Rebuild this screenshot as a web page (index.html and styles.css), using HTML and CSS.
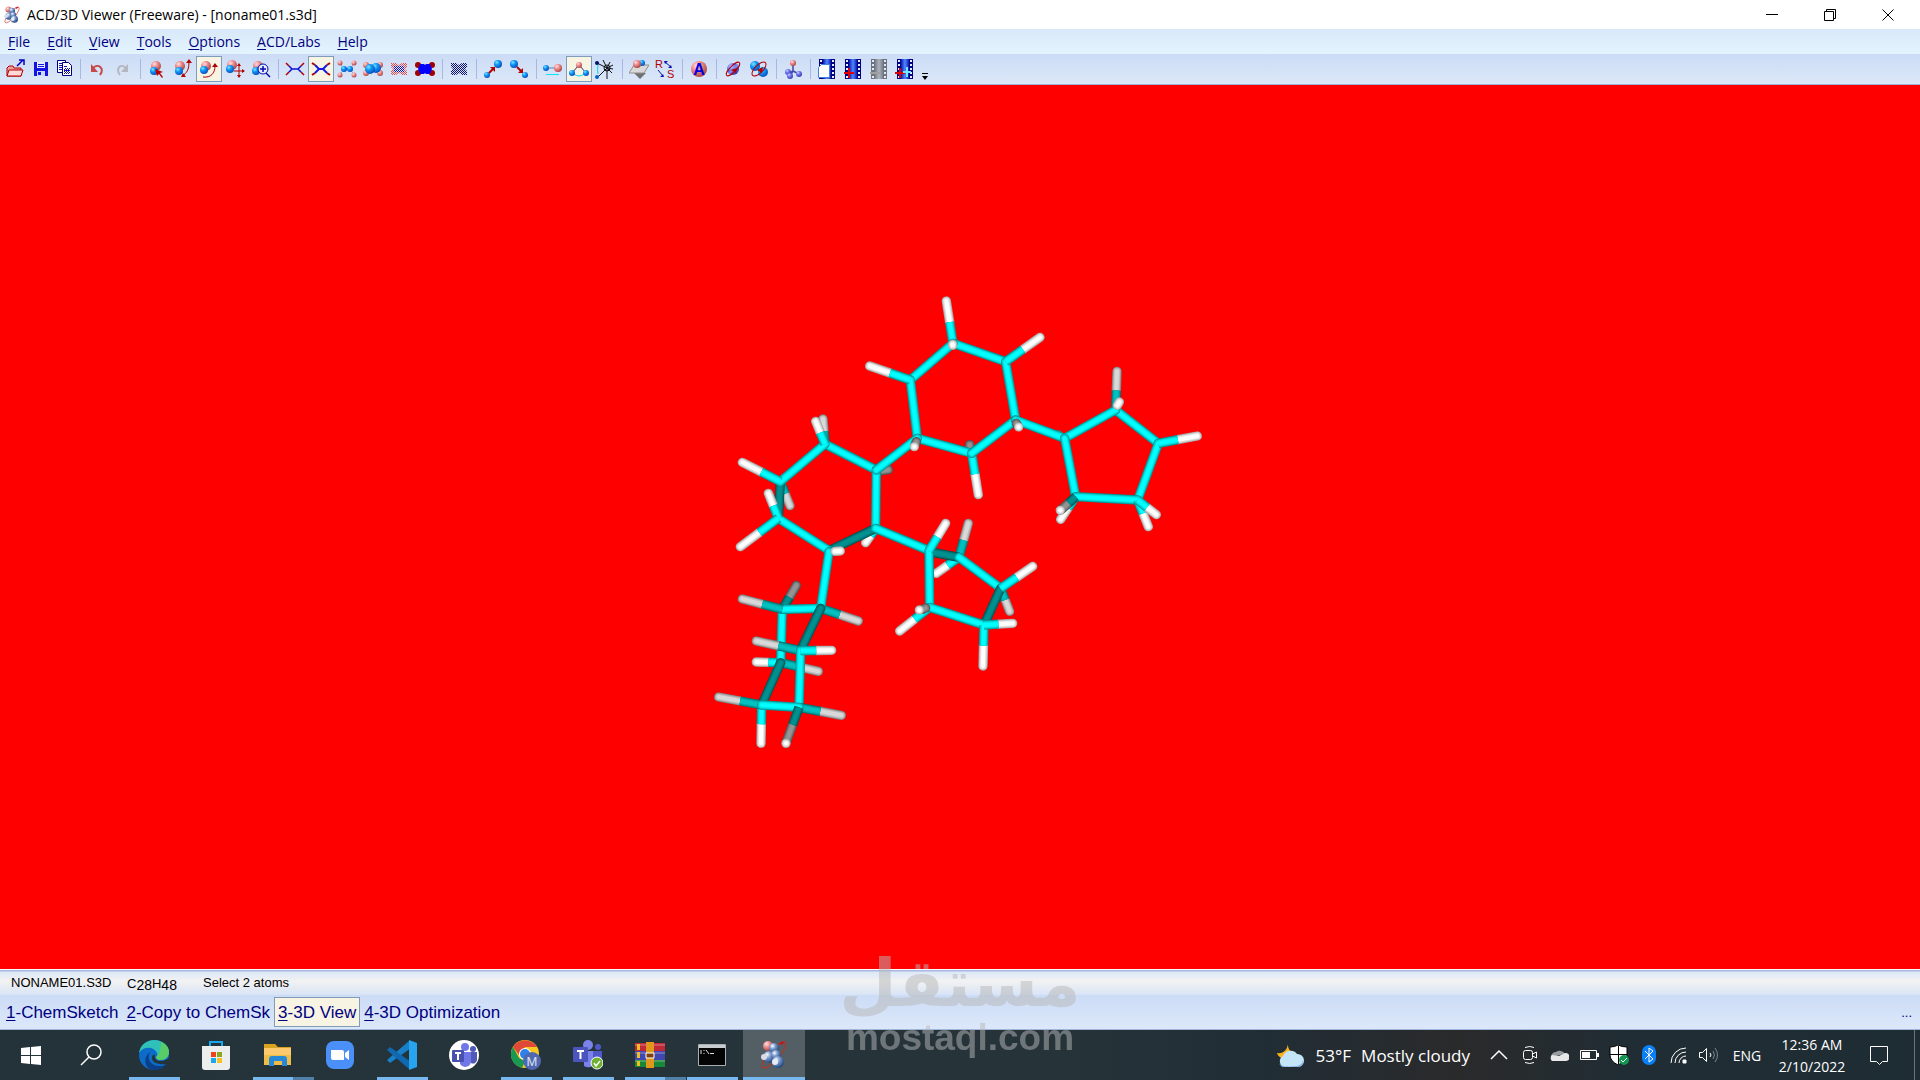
FILE: index.html
```html
<!DOCTYPE html>

<html lang="en">
<head>
    <meta charset="utf-8">
    <title>ACD/3D Viewer (Freeware) - [noname01.s3d]</title>
    <link rel="stylesheet" href="styles.css">
</head>

<body>

<!-- gradients and shapes shared by the icons -->
<svg class="defs" aria-hidden="true">
    <defs>
        <radialGradient id="red" cx="35%" cy="30%" r="75%">
            <stop offset="0" stop-color="#ffe4e4"/><stop offset=".4" stop-color="#ef9090"/><stop offset="1" stop-color="#a84040"/>
        </radialGradient>
        <radialGradient id="blue" cx="35%" cy="30%" r="75%">
            <stop offset="0" stop-color="#7fe8ff"/><stop offset=".4" stop-color="#1098f8"/><stop offset="1" stop-color="#0848b8"/>
        </radialGradient>
        <radialGradient id="violet" cx="35%" cy="30%" r="75%">
            <stop offset="0" stop-color="#d0d0ff"/><stop offset=".4" stop-color="#7078f0"/><stop offset="1" stop-color="#3838b0"/>
        </radialGradient>
        <radialGradient id="steel" cx="35%" cy="30%" r="75%">
            <stop offset="0" stop-color="#ffffff"/><stop offset=".4" stop-color="#7898cc"/><stop offset="1" stop-color="#1c4074"/>
        </radialGradient>
        <linearGradient id="film" x1="0" x2="1">
            <stop offset="0" stop-color="#0818b0"/><stop offset=".5" stop-color="#5088ff"/><stop offset="1" stop-color="#0818b0"/>
        </linearGradient>
        <pattern id="reddots" width="2" height="2" patternUnits="userSpaceOnUse"><path d="M0 0h1v1H0zM1 1h1v1H1z" fill="#e84848"/></pattern>
        <pattern id="bluedots" width="2" height="2" patternUnits="userSpaceOnUse"><path d="M0 0h2v2H0z" fill="#e8f0ff"/><path d="M0 0h1v1H0zM1 1h1v1H1z" fill="#1010c8"/></pattern>
        <pattern id="navydots" width="2" height="2" patternUnits="userSpaceOnUse"><path d="M0 0h1v1H0zM1 1h1v1H1z" fill="#101078"/></pattern>
        <symbol id="logo" viewBox="0 0 30 30">
            <ellipse cx="15" cy="15" rx="5" ry="17" fill="none" stroke="#c03020" stroke-width="1" transform="rotate(42 15 15)"/>
            <circle cx="9" cy="6" r="5" fill="url(#red)"/>
            <circle cx="15" cy="8" r="5" fill="url(#steel)"/>
            <circle cx="10" cy="17" r="6" fill="url(#steel)"/>
            <circle cx="17" cy="15" r="5" fill="url(#steel)"/>
            <circle cx="19" cy="22" r="6" fill="url(#steel)"/>
            <circle cx="5" cy="17" r="3" fill="#d8dce4"/>
            <circle cx="16" cy="22" r="3" fill="#e8ecf4"/>
            <path d="M20 3l6-2-3 4z" fill="#d01010"/>
        </symbol>
        <symbol id="filmstrip" viewBox="0 0 20 20">
            <path d="M2 0h16v20H2z" fill="#000080"/>
            <path d="M6 0h8v20H6z" fill="url(#film)"/>
            <path d="M3 1h2v2H3zm0 4h2v2H3zm0 4h2v2H3zm0 4h2v2H3zm0 4h2v2H3zM15 1h2v2h-2zm0 4h2v2h-2zm0 4h2v2h-2zm0 4h2v2h-2zm0 4h2v2h-2z" fill="#e8f0ff"/>
        </symbol>
    </defs>
</svg>

<header class="titlebar">
    <svg class="appicon" viewBox="0 0 30 30"><use href="#logo"/></svg>
    <h1>ACD/3D Viewer (Freeware) - [noname01.s3d]</h1>
    <div class="winbuttons">
        <button aria-label="Minimize"><svg viewBox="0 0 12 12"><path d="M0 5.5h12"/></svg></button>
        <button aria-label="Restore"><svg viewBox="0 0 12 12"><path d="M.5 2.5h9v9h-9zM2.5 2.5v-2h9v9h-2"/></svg></button>
        <button aria-label="Close"><svg viewBox="0 0 12 12"><path d="M.5.5l11 11M11.5.5l-11 11"/></svg></button>
    </div>
</header>

<nav class="menu">
    <button><u>F</u>ile</button>
    <button><u>E</u>dit</button>
    <button><u>V</u>iew</button>
    <button><u>T</u>ools</button>
    <button><u>O</u>ptions</button>
    <button><u>A</u>CD/Labs</button>
    <button><u>H</u>elp</button>
</nav>

<div class="toolbar">
    <div class="group files">
        <button aria-label="Open"><svg viewBox="0 0 20 20"><path d="M1 17V9l2-2h4l1 2h7v8z" fill="#f0a0a0" stroke="#b00000"/><path d="M1 17l2-6h14l-2 6z" fill="#ffd8d8" stroke="#b00000"/><path d="M11 7l6-6M13 1h5v5" fill="none" stroke="#0000c0" stroke-width="1.5"/></svg></button>
        <button aria-label="Save"><svg viewBox="0 0 20 20"><path d="M4 3h14v14H4z" fill="#1414e0"/><path d="M7 3h8v6H7z" fill="#e8f0ff"/><path d="M8 5.5h6M8 7.5h6" stroke="#1414e0"/><path d="M7 12h8v5H7z" fill="#c8d8f8"/><path d="M8 13h3v3H8z" fill="#1414e0"/></svg></button>
        <button aria-label="Copy"><svg viewBox="0 0 20 20"><path d="M3.5 1.5h8v12h-8z" fill="#fff" stroke="#000080"/><path d="M5 4.5h4M5 6.500h4M5 8.500h4M5 10.5h4" stroke="#1010c0"/><path d="M8.500 3.500h6l3 3v10h-9z" fill="#fff" stroke="#000080"/><path d="M10 9h6v6h-6z" fill="url(#navydots)"/><path d="M10 7.500h3M10 11.500h6" stroke="#1010c0"/></svg></button>
    </div>
    <i class="sep"></i>
    <div class="group">
        <button aria-label="Undo"><svg viewBox="0 0 20 20"><path d="M6 9c5-5 12 0 7 7" fill="none" stroke="#c84848" stroke-width="2"/><path d="M4 5v8h7z" fill="#c84848"/></svg></button>
        <button aria-label="Redo" disabled><svg viewBox="0 0 20 20"><path d="M13 9c-5-5-11 0-6 7" fill="none" stroke="#b4b8be" stroke-width="2"/><path d="M15 5v8H8z" fill="#b4b8be"/></svg></button>
    </div>
    <i class="sep"></i>
    <div class="group">
        <button aria-label="Select"><svg viewBox="0 0 20 20"><circle cx="9" cy="7" r="5" fill="url(#red)"/><circle cx="7" cy="12" r="4" fill="url(#blue)"/><path d="M8 10l8 3-3 1 3 4-1 1-3-4-2 2z" fill="#b80000"/></svg></button>
        <button aria-label="Select and rotate"><svg viewBox="0 0 20 20"><circle cx="7" cy="7" r="5" fill="url(#red)"/><circle cx="6" cy="12" r="4" fill="url(#blue)"/><path d="M16 2c0 9-2 12-7 15" fill="none" stroke="#b00000"/><path d="M16 0l-3 4h6zM8 18l5 0-3-4z" fill="#b00000"/></svg></button>
        <button class="on" aria-label="Rotate 3D" aria-pressed="true"><svg viewBox="0 0 20 20"><circle cx="7" cy="7" r="5" fill="url(#red)"/><circle cx="5" cy="11" r="4" fill="url(#blue)"/><path d="M4 18c8 1 12-4 12-11" fill="none" stroke="#b00000"/><path d="M16 4l-3 4h6z" fill="#b00000"/></svg></button>
        <button aria-label="Move"><svg viewBox="0 0 20 20"><circle cx="7" cy="6" r="5" fill="url(#red)"/><circle cx="5" cy="10" r="4" fill="url(#blue)"/><path d="M14 6v12M9 12h10" stroke="#b00000"/><path d="M14 4l-2 3h4zm0 15l-2-3h4zM20 12l-3-2v4z" fill="#b00000"/></svg></button>
        <button aria-label="Zoom"><svg viewBox="0 0 20 20"><circle cx="7" cy="7" r="5" fill="url(#red)"/><circle cx="5" cy="12" r="4" fill="url(#blue)"/><circle cx="12" cy="10" r="5" fill="#e4f0ff" stroke="#0808b0"/><path d="M12 7v6M9 10h6M15 14l4 4" stroke="#0808b0" stroke-width="1.5"/></svg></button>
    </div>
    <i class="sep"></i>
    <div class="group">
        <button aria-label="Wireframe"><svg viewBox="0 0 20 20"><path d="M1 4l3 3M1 16l3-3M19 4l-3 3M19 16l-3-3" stroke="#b00000" stroke-width="1.5"/><path d="M4 7l3 3-3 3M7 10h6M16 7l-3 3 3 3" fill="none" stroke="#1010d0" stroke-width="1.5"/></svg></button>
        <button class="on" aria-label="Sticks" aria-pressed="true"><svg viewBox="0 0 20 20"><path d="M1 4l3 2M1 16l3-2M19 4l-3 2M19 16l-3-2" stroke="#b00000" stroke-width="2"/><path d="M4 6l4 4-4 4M7 10h6M16 6l-4 4 4 4" fill="none" stroke="#1818e0" stroke-width="2"/></svg></button>
        <button aria-label="Balls and Sticks"><svg viewBox="0 0 20 20"><path d="M2 3l5 7-5 7M18 3l-5 7 5 7M7 10h6" fill="none" stroke="#a0a8d0"/><circle cx="3" cy="4" r="2.500" fill="url(#red)"/><circle cx="3" cy="16" r="2.500" fill="url(#red)"/><circle cx="17" cy="4" r="2.500" fill="url(#red)"/><circle cx="17" cy="16" r="2.500" fill="url(#red)"/><path d="M7 10h6" stroke="#0848b8" stroke-width="2"/><circle cx="7" cy="10" r="3" fill="url(#blue)"/><circle cx="13" cy="10" r="3" fill="url(#blue)"/></svg></button>
        <button aria-label="Spacefill"><svg viewBox="0 0 20 20"><circle cx="3" cy="6" r="3" fill="url(#red)"/><circle cx="3" cy="14" r="3" fill="url(#red)"/><circle cx="17" cy="6" r="3" fill="url(#red)"/><circle cx="17" cy="14" r="3" fill="url(#red)"/><circle cx="13" cy="9" r="5" fill="url(#blue)"/><circle cx="7" cy="10" r="5" fill="url(#blue)"/></svg></button>
        <button aria-label="Dots Only"><svg viewBox="0 0 20 20"><path d="M2 4h5l3 2 3-2h5v4l-2 2 2 2v4h-5l-3-2-3 2H2v-4l2-2-2-2z" fill="url(#reddots)"/><path d="M5 7h10v6H5z" fill="url(#bluedots)"/></svg></button>
        <button aria-label="Disks"><svg viewBox="0 0 20 20"><circle cx="3" cy="6" r="3" fill="#a00000"/><circle cx="3" cy="14" r="3" fill="#a00000"/><circle cx="17" cy="6" r="3" fill="#a00000"/><circle cx="17" cy="14" r="3" fill="#a00000"/><path d="M5 5h4l1 1 1-1h4l2 5-2 5h-4l-1-1-1 1H5l-2-5z" fill="#0000ff"/></svg></button>
    </div>
    <i class="sep"></i>
    <div class="group">
        <button aria-label="With Dots"><svg viewBox="0 0 20 20"><path d="M2 4h5l3 2 3-2h5v4l-2 2 2 2v4h-5l-3-2-3 2H2v-4l2-2-2-2z" fill="url(#navydots)"/></svg></button>
    </div>
    <i class="sep"></i>
    <div class="group">
        <button aria-label="Add atom"><svg viewBox="0 0 20 20"><circle cx="15" cy="5" r="4" fill="url(#blue)"/><circle cx="4" cy="16" r="3" fill="url(#blue)"/><path d="M6 14l4-4" stroke="#b00000" stroke-width="2"/><path d="M12 8v5l-5-5z" fill="#b00000"/></svg></button>
        <button aria-label="Remove atom"><svg viewBox="0 0 20 20"><circle cx="5" cy="5" r="4" fill="url(#blue)"/><circle cx="16" cy="16" r="3" fill="url(#blue)"/><path d="M8 8l4 4" stroke="#b00000" stroke-width="2"/><path d="M14 9v5H9z" fill="#b00000"/></svg></button>
    </div>
    <i class="sep"></i>
    <div class="group">
        <button aria-label="Bond length"><svg viewBox="0 0 20 20"><path d="M4 9h10" stroke="#6080a0"/><circle cx="3" cy="9" r="3" fill="url(#blue)"/><circle cx="15" cy="9" r="4" fill="url(#red)"/><path d="M3 15.5h13" stroke="#00e8f8"/></svg></button>
        <button class="on" aria-label="Bond angle" aria-pressed="true"><svg viewBox="0 0 20 20"><path d="M2 15l8-9 8 9" fill="none" stroke="#303060"/><circle cx="10" cy="6" r="3" fill="url(#red)"/><path d="M5 15q5 4 10 0" fill="none" stroke="#00d8f0"/><circle cx="3" cy="14" r="3" fill="url(#blue)"/><circle cx="17" cy="14" r="3" fill="url(#blue)"/></svg></button>
        <button aria-label="Torsion angle"><svg viewBox="0 0 20 20"><path d="M2 4l10 5-9 9M12 9l-4-8M12 9l3-6M12 9l6-3M12 9l6 1M12 9l5 5M12 9v11" fill="none" stroke="#101018"/><circle cx="12" cy="9" r="3" fill="none" stroke="#101018"/><path d="M3 6q-1 5 0 9" fill="none" stroke="#00d8f0"/><circle cx="2" cy="4" r="2" fill="#001068"/><circle cx="2" cy="18" r="2" fill="#0068c0"/></svg></button>
    </div>
    <i class="sep"></i>
    <div class="group">
        <button aria-label="Center"><svg viewBox="0 0 20 20"><path d="M5 14h12l-6 6z" fill="#707070"/><path d="M0 14l5-8h15l-5 8z" fill="#d8d8d8" stroke="#909090"/><circle cx="13" cy="4" r="3" fill="url(#blue)"/><circle cx="8" cy="5" r="4" fill="url(#red)"/></svg></button>
        <button aria-label="Invert R/S"><svg viewBox="0 0 20 20"><text class="glyph-rs" x="0" y="9">R</text><text class="glyph-rs" x="12" y="19">S</text><path d="M10 3l6 5M3 11l5 6" stroke="#1010b0"/><path d="M9 2h4l-3 3zM17 9h-4l3-3zM9 18H5l3-3z" fill="#1010b0"/></svg></button>
    </div>
    <i class="sep"></i>
    <div class="group">
        <button aria-label="Label atoms"><svg viewBox="0 0 20 20"><circle cx="10" cy="10" r="8" fill="url(#red)"/><text class="glyph-a" x="10" y="16">A</text></svg></button>
    </div>
    <i class="sep"></i>
    <div class="group">
        <button aria-label="Auto rotate"><svg viewBox="0 0 20 20"><circle cx="10" cy="10" r="6" fill="url(#violet)"/><ellipse cx="10" cy="10" rx="9" ry="3" fill="none" stroke="#b00000" transform="rotate(-45 10 10)"/><path d="M5 14L14 5l2 1-9 9z" fill="#8088f0"/><path d="M14 9l-6 2 5 3z" fill="#b00000"/></svg></button>
        <button aria-label="Auto rotate and change style"><svg viewBox="0 0 20 20"><circle cx="6" cy="7" r="5" fill="url(#blue)"/><circle cx="14" cy="13" r="5" fill="url(#blue)"/><ellipse cx="10" cy="10" rx="9" ry="4" fill="none" stroke="#b00000" transform="rotate(-45 10 10)"/><path d="M14 8l-6 3 5 3z" fill="#b00000"/></svg></button>
    </div>
    <i class="sep"></i>
    <div class="group">
        <button aria-label="3D Optimization"><svg viewBox="0 0 20 20"><path d="M10 4v8l-5 3M10 12l6 3M10 12l-3 5" fill="none" stroke="#4048a0" stroke-width="1.5"/><circle cx="10" cy="4" r="3" fill="url(#red)"/><circle cx="5" cy="13" r="3" fill="url(#violet)"/><circle cx="7" cy="17" r="3" fill="url(#violet)"/><circle cx="16" cy="15" r="3" fill="url(#violet)"/></svg></button>
    </div>
    <i class="sep"></i>
    <div class="group">
        <button aria-label="New movie"><svg viewBox="0 0 20 20"><use href="#filmstrip"/><path d="M1.500 8.500l3-3h8v13h-11z" fill="#fff" stroke="#4080e0"/></svg></button>
        <button aria-label="Add frame"><svg viewBox="0 0 20 20"><use href="#filmstrip"/><path d="M6 9v10M1 14h10" stroke="#e00000" stroke-width="2"/></svg></button>
        <button aria-label="Remove frame" disabled><svg viewBox="0 0 20 20"><use href="#filmstrip" class="gray"/><path d="M1 14h10" stroke="#a0a0a0" stroke-width="2"/></svg></button>
        <button aria-label="Record"><svg viewBox="0 0 20 20"><use href="#filmstrip"/><path d="M5 9v10M0 14h10" stroke="#e00000" stroke-width="2"/><path d="M12 8v10M8 13h8" stroke="#70e8ff" stroke-width="2"/></svg></button>
    </div>
    <button class="more" aria-label="More buttons"><svg viewBox="0 0 6 8"><path d="M0 1h6v1H0zM0 4h6L3 8z"/></svg></button>
</div>

<main class="scene">
    <svg id="molecule" viewBox="-2097 -585 5760 2652" role="img" aria-label="C28H48"></svg>
</main>

<footer class="status">
    <span class="filename">NONAME01.S3D</span>
    <span class="formula">C<sub>28</sub>H<sub>48</sub></span>
    <span>Select 2 atoms</span>
</footer>

<nav class="tabs">
    <button><u>1</u>-ChemSketch</button>
    <button><u>2</u>-Copy to ChemSk</button>
    <button class="on"><u>3</u>-3D View</button>
    <button><u>4</u>-3D Optimization</button>
    <span class="dots">...</span>
</nav>

<div class="taskbar">
    <button class="start" aria-label="Start"><svg viewBox="0 0 30 30"><path d="M5 8l9-1v8H5zM15 7l10-1v9H15zM5 16h9v8l-9-1zM15 16h10v9l-10-1z" fill="#fff"/></svg></button>
    <button aria-label="Search"><svg viewBox="0 0 30 30"><circle cx="17" cy="12" r="7" fill="none" stroke="#fff" stroke-width="1.5"/><path d="M12 17l-8 8" stroke="#fff" stroke-width="1.5"/></svg></button>
    <button class="open" aria-label="Edge"><svg viewBox="0 0 30 30"><circle cx="15" cy="15" r="15" fill="#0c6cc8"/><path d="M0 13C1 5 8 0 15 0c9 0 15 6 15 12 0 5-4 8-8 8-3 0-5-1-5-3 1-1 2-2 1-4C15 6 4 6 0 13z" fill="#30c0b8"/><path d="M22 2c5 2 8 6 8 10 0 5-4 8-8 8-3 0-5-1-5-3 4-3 5-9 5-15z" fill="#58cc68"/><path d="M11 12c-4 7 1 15 11 14 3 0 5-2 6-3-3 5-8 7-13 7-9 0-12-12-4-18z" fill="#0c3f88"/><path d="M16 15c-1 4 2 6 6 6 3 0 5-1 8-3v5l-3 1c-7 1-14-1-14-6 0-2 1-4 3-3z" fill="#24333a"/></svg></button>
    <button aria-label="Store"><svg viewBox="0 0 30 30"><path d="M9 7V2h12v5" fill="none" stroke="#18a8f0" stroke-width="2"/><path d="M1 6h28v21a3 3 0 0 1-3 3H4a3 3 0 0 1-3-3z" fill="#eceeee"/><path d="M10 12h5v5h-5z" fill="#f04020"/><path d="M16 12h5v5h-5z" fill="#88a820"/><path d="M10 18h5v5h-5z" fill="#18a8f0"/><path d="M16 18h5v5h-5z" fill="#f8c020"/></svg></button>
    <button class="open many" aria-label="File Explorer"><svg viewBox="0 0 30 30"><path d="M1 4h11l3 3h13v18H1z" fill="#d8a420"/><path d="M1 8h27v17H1z" fill="#fcca6c"/><path d="M1 15h27v10H1z" fill="#f0bc48"/><path d="M6 26v-7a3 3 0 0 1 3-3h12a3 3 0 0 1 3 3v7h-5v-5h-8v5z" fill="#2888d8"/></svg></button>
    <button aria-label="Zoom"><svg viewBox="0 0 30 30"><rect x="1" y="1" width="28" height="28" rx="8" fill="#4a90f8"/><path d="M6 10h11a2 2 0 0 1 2 2v8H8a2 2 0 0 1-2-2zM20 13l4-3v10l-4-3z" fill="#fff"/></svg></button>
    <button class="open" aria-label="Visual Studio Code"><svg viewBox="0 0 30 30"><path d="M22 1L0 20l3 3L24 8z" fill="#1880c8"/><path d="M22 29L0 10l3-3 21 15z" fill="#1068b0"/><path d="M22 0l8 3v24l-8 3z" fill="#28a4ee"/></svg></button>
    <button aria-label="Teams"><svg viewBox="0 0 30 30"><circle cx="15" cy="15" r="15" fill="#fff"/><circle cx="16" cy="7" r="4" fill="#7078e8"/><circle cx="24" cy="9" r="3" fill="#5058b8"/><path d="M11 12h11v10a6 6 0 0 1-11 2z" fill="#7078e8"/><path d="M22 12h6v8a4 4 0 0 1-6 3z" fill="#5058b8"/><rect x="3" y="10" width="12" height="12" rx="1" fill="#4850b0"/><path d="M6 13h6M9 13v7" stroke="#fff" stroke-width="2"/></svg></button>
    <button class="open" aria-label="Chrome"><svg viewBox="0 0 30 30"><circle cx="14" cy="14" r="14" fill="#f8c820"/><path d="M2 7a14 14 0 0 1 24 0H14l-6 8z" fill="#e04838"/><path d="M2 7l6 11 6 3-3 7A14 14 0 0 1 2 7z" fill="#189850"/><circle cx="14" cy="14" r="6" fill="#fff"/><circle cx="14" cy="14" r="5" fill="#3080e8"/><circle cx="21" cy="21" r="9" fill="#5068b0"/><text class="badge-m" x="21" y="26">M</text></svg></button>
    <button class="open" aria-label="Teams for work"><svg viewBox="0 0 30 30"><circle cx="15" cy="5" r="5" fill="#7b83eb"/><circle cx="25" cy="7" r="3" fill="#5059c9"/><path d="M11 11h11v10a7 7 0 0 1-11 5z" fill="#7b83eb"/><path d="M20 11h9v13h-9z" fill="#5059c9"/><rect y="7" width="15" height="15" rx="1" fill="#4b53bc"/><path d="M4 11h7M7.500 11v8" stroke="#fff" stroke-width="2"/><circle cx="24" cy="23" r="6" fill="#70b030" stroke="#fff"/><path d="M21 23l2 3 4-5" fill="none" stroke="#fff" stroke-width="1.5"/></svg></button>
    <button class="open many" aria-label="WinRAR"><svg viewBox="0 0 30 30"><path d="M0 3h30v8H0z" fill="#c02838"/><path d="M0 11h30v9H0z" fill="#4048b0"/><path d="M0 20h30v7H0z" fill="#188838"/><path d="M0 5h30M0 13h30M0 21h30" stroke="#ffffff66"/><path d="M2 4h3v6H2zm0 8h3v6H2zm0 9h3v5H2z" fill="#f0c020"/><path d="M11 2h8v26h-8z" fill="#e0981c"/><path d="M11 13h8v5h-8z" fill="#804010" stroke="#fff"/></svg></button>
    <button class="open" aria-label="Command Prompt"><svg viewBox="0 0 30 30"><path d="M1.500 4.500h27v21h-27z" fill="#050505" stroke="#a8b0b4"/><path d="M2 5h26v3H2z" fill="#c8ccd0"/><path d="M4 10v4M7 10v1M7 13v1M9 10l3 4M13 13.5h4" stroke="#e0e0e0"/></svg></button>
    <button class="open current" aria-label="ACD/3D Viewer"><svg viewBox="0 0 30 30"><use href="#logo"/></svg></button>

    <div class="tray">
        <button class="weather">
            <svg viewBox="0 0 30 30"><path d="M12 1c-1 6 2 11 9 12l-5 5C8 20 2 16 1 12c6 1 11-3 11-11z" fill="#f8b418"/><path d="M8 26a6 6 0 0 1-1-11 8 8 0 0 1 14-2 6 6 0 0 1 1 13z" fill="#c4e4f8"/><path d="M3 22c2 3 6 4 18 3 4-1 6-3 6-6 1 4-1 7-5 7H8c-3 0-4-2-5-4z" fill="#88b0e8"/></svg>
            <span>53°F</span><span>Mostly cloudy</span>
        </button>
        <button class="chevron" aria-label="Show hidden icons"><svg viewBox="0 0 20 20"><path d="M2 14l8-8 8 8" fill="none" stroke="#fff" stroke-width="1.5"/></svg></button>
        <button aria-label="Meet Now"><svg viewBox="0 0 20 20" fill="none" stroke="#fff"><rect x="4.500" y="5.500" width="9" height="9" rx="2"/><path d="M13.500 9l4-2v6l-4-2M6 2.500q5-2 9 0M6 17.500q5 2 9 0"/></svg></button>
        <button aria-label="OneDrive"><svg viewBox="0 0 20 20"><path d="M2 12a5 5 0 0 1 5-5 6 6 0 0 1 9 2z" fill="#989ca0"/><path d="M3 16a4 4 0 0 1 0-6l7 1 6-3a4 4 0 0 1 1 8z" fill="#e8e8e8"/></svg></button>
        <button aria-label="Battery"><svg viewBox="0 0 20 20"><path d="M1.500 5.500h16v9h-16z" fill="none" stroke="#fff"/><path d="M3 7h8v6H3zM18 8h2v4h-2z" fill="#fff"/></svg></button>
        <button aria-label="Windows Security"><svg viewBox="0 0 20 20"><path d="M1 2q5 0 8-2 4 2 9 2v8q-1 6-9 10-8-4-8-10z" fill="#fff" stroke="#000"/><path d="M9.500 1v18M1 9.500h17" stroke="#000"/><circle cx="15" cy="15" r="5" fill="#109850"/><path d="M12 15l2 2 4-4" fill="none" stroke="#fff"/></svg></button>
        <button aria-label="Bluetooth"><svg viewBox="0 0 20 20"><rect x="3" width="14" height="20" rx="7" fill="#0a80f8"/><path d="M6 6l8 8-4 3V3l4 3-8 8" fill="none" stroke="#fff"/></svg></button>
        <button aria-label="Network"><svg viewBox="0 0 20 20" fill="none" stroke="#fff"><path d="M2 18A15 15 0 0 1 17 3M6 18A11 11 0 0 1 17 7M10 18a7 7 0 0 1 7-7"/><path d="M14 18v-3h3v3z" fill="#fff"/></svg></button>
        <button aria-label="Volume"><svg viewBox="0 0 20 20" fill="none" stroke="#fff"><path d="M.5 7.500h3l4-4v13l-4-4h-3zM11 8q2 2 0 4"/><path d="M14 6q3 4 0 8M16 3q5 7 0 14" stroke="#808890"/></svg></button>
        <button class="lang">ENG</button>
        <button class="clock"><span>12:36 AM</span><span>2/10/2022</span></button>
        <button class="notify" aria-label="Notifications"><svg viewBox="0 0 20 20"><path d="M1.500 1.500h17v15h-5l-3 3-3-3h-6z" fill="none" stroke="#fff"/></svg></button>
        <i class="peek"></i>
    </div>
</div>

<div class="watermark">
    <div class="ar" lang="ar" dir="rtl">مستقل</div>
    <div class="en">mostaql.com</div>
</div>

<script src="molecule.js"></script>

</body>
</html>
```
FILE: styles.css
```css
*{
    box-sizing: border-box;
}
body{
    display: flex;
    flex-direction: column;
    height: 100vh;
    margin: 0;
    overflow: hidden;
    position: relative;
    font-family: "Open Sans", "Noto Sans", sans-serif;
    font-size: 14px;
    color: #000;
}
button{
    display: flex;
    align-items: center;
    justify-content: center;
    margin: 0;
    padding: 0;
    border: 0;
    background: none;
    font: inherit;
    color: inherit;
    white-space: nowrap;
}
u{
    text-underline-offset: 2px;
}
.defs{
    position: absolute;
    width: 0;
    height: 0;
}

/* title bar */
.titlebar{
    display: flex;
    align-items: center;
    height: 29px;
    padding: 0 3px;
    background: #fff;
}
.titlebar h1{
    margin: 0 auto 0 6px;
    font-size: 14px;
    font-weight: normal;
}
.appicon{
    width: 18px;
    height: 20px;
}
.winbuttons{
    display: flex;
}
.winbuttons button{
    width: 58px;
    height: 29px;
}
.winbuttons svg{
    width: 12px;
    height: 12px;
    fill: none;
    stroke: #000;
}

/* menu */
.menu{
    display: flex;
    gap: 17px;
    height: 25px;
    padding: 0 8px;
    background: linear-gradient(#d8e8f8, #e4f4ff);
    color: #000080;
}

/* toolbar */
.toolbar{
    display: flex;
    align-items: center;
    height: 31px;
    padding-left: 4px;
    border-bottom: 1px solid #a0b0d8;
    background: linear-gradient(#ccdcf6, #dce8f8);
}
.group{
    display: flex;
}
.group button{
    width: 26px;
    height: 26px;
    border: 1px solid transparent;
}
.files button{
    width: 24px;
}
.group svg{
    width: 20px;
    height: 20px;
    flex: none;
}
.group .on{
    border-color: #7f9db9;
    background: #f8f4e4;
}
.sep{
    width: 8px;
    height: 20px;
    background: linear-gradient(#a8b8e4, #a8b8e4) center / 1px 100% no-repeat;
}
.gray{
    filter: grayscale(1);
    opacity: .5;
}
.glyph-rs{
    font: 11px "Liberation Sans", sans-serif;
    fill: #b00000;
}
.glyph-a{
    font: bold 16px "Liberation Sans", sans-serif;
    fill: #0000e0;
    text-anchor: middle;
}
.more{
    align-self: flex-end;
    width: 14px;
    height: 16px;
}
.more svg{
    width: 6px;
    height: 8px;
}

/* 3D view */
.scene{
    flex: 1;
    min-height: 0;
    background: #f00;
}
#molecule{
    display: block;
    width: 100%;
    height: 100%;
    fill: none;
    stroke-linecap: round;
}

/* status line and tabs */
.status{
    display: flex;
    align-items: center;
    height: 26px;
    padding: 0 11px;
    border-top: 1px solid #fff;
    background: linear-gradient(#a8b8e0 1px, #dce8f8 2px, #f2f2f2 11px, #d8e4f6);
    font: 13px "Liberation Sans", Arial, sans-serif;
}
.filename{
    width: 116px;
}
.formula{
    width: 76px;
    padding-top: 2px;
}
.formula sub{
    font-size: 14px;
    line-height: 0;
    vertical-align: -2px;
}
.tabs{
    display: flex;
    align-items: center;
    height: 35px;
    padding: 0 8px 0 2px;
    border-bottom: 1px solid #a0b4dc;
    background: linear-gradient(#ccdcf6, #dce8fa);
    font: 17px "Liberation Sans", Arial, sans-serif;
    color: #000080;
}
.tabs button{
    height: 30px;
    padding: 2px 3px 0;
    border: 1px solid transparent;
}
.tabs .on{
    border-color: #7f9db9;
    background: #f8f4e4;
}
.dots{
    margin-left: auto;
    font-size: 13px;
}

/* taskbar */
.taskbar{
    display: flex;
    height: 50px;
    background: linear-gradient(90deg, #24333a 0%, #26343a 55%, #212d35 66%, #2a2a2b 76%, #202d34 85%, #1e2c33 100%);
    color: #fff;
}
.taskbar > button{
    width: 62px;
    position: relative;
}
.taskbar > .start{
    width: 61px;
}
.taskbar > button svg{
    width: 30px;
    height: 30px;
}
.open::after{
    content: "";
    position: absolute;
    left: 6px;
    right: 5px;
    bottom: 0;
    height: 3px;
    background: #78b8f0;
}
.many::after{
    right: -5px;
    background: linear-gradient(90deg, #78b8f0 40px, #5080a8 40px);
}
.current{
    background: #535f65;
}
.taskbar > .current{
    background: #535f65;
}
.current::after{
    left: 0;
    right: 0;
}
.badge-m{
    font: 13px "Liberation Sans", sans-serif;
    fill: #d8e0f0;
    text-anchor: middle;
}
.tray{
    display: flex;
    margin-left: auto;
    font-size: 14px;
}
.tray button{
    width: 30px;
}
.tray svg{
    width: 20px;
    height: 20px;
}
.tray .weather{
    width: auto;
    gap: 10px;
    margin-right: 14px;
    padding-top: 1px;
    font-size: 17px;
}
.weather svg{
    width: 30px;
    height: 30px;
}
.tray .lang{
    width: 46px;
}
.tray .clock{
    flex-direction: column;
    width: 84px;
    gap: 3px;
}
.tray .notify{
    width: 50px;
}
.peek{
    width: 6px;
    margin-left: 10px;
    border-left: 1px solid #68747a;
}

/* watermark over the bottom bars */
.watermark{
    position: absolute;
    left: 50%;
    bottom: 22px;
    transform: translateX(-50%);
    text-align: center;
    color: #b8b8b8;
    opacity: .5;
    pointer-events: none;
}
.watermark .ar{
    font: bold 66px/68px "DejaVu Sans", sans-serif;
}
.watermark .en{
    font: bold 37px/40px "Liberation Sans", sans-serif;
}
```
FILE: molecule.js
```js
// tube shades, from the outer edge to the middle
var shades = {
    c:  ['#009090', '#00bcbc', '#00e4e4', '#00ffff'],
    cm: ['#006c6c', '#009090', '#00acac', '#00c0c0'],
    cd: ['#005050', '#006c6c', '#008080', '#009090'],
    h:  ['#a0a0a0', '#c4c4c4', '#e4e4e4', '#ffffff'],
    hm: ['#787878', '#a0a0a0', '#c0c0c0', '#d8d8d8'],
    hd: ['#505050', '#686868', '#808080', '#949494']
};
var widths = [28, 24, 19, 12];

var svg = document.getElementById('molecule');

function tube(x1, y1, x2, y2, shade, cap) {
    for (var i = 0; i < 4; i++) {
        var el = document.createElementNS('http://www.w3.org/2000/svg', 'line');
        el.setAttribute('x1', x1);
        el.setAttribute('y1', y1);
        el.setAttribute('x2', x2);
        el.setAttribute('y2', y2);
        el.setAttribute('stroke', shades[shade][i]);
        el.setAttribute('stroke-width', widths[i]);
        if (cap) el.setAttribute('stroke-linecap', cap);
        svg.appendChild(el);
    }
}

// carbon to hydrogen: the first half is cyan, the second one is white
function hydrogen(x1, y1, x2, y2, tone) {
    var mx = (x1 + x2) / 2, my = (y1 + y2) / 2;
    tube(mx, my, x2, y2, 'h' + tone);
    tube(x1, y1, mx, my, 'c' + tone, 'butt');
}

// [kind, x1, y1, x2, y2, tone], back to front
var bonds = [
    // back hydrogens
    ['h', 378, 492, 372, 417, 'm'],
    ['s', 812, 500, 812, 494, 'hd'],
    ['s', 1077, 468, 1077, 463, 'hd'],
    ['s', 550, 572, 568, 569, 'hd'],
    ['h', 244, 605, 273, 677, 'm'],
    ['h', 530, 745, 500, 788, ''],
    ['h', 1130, 650, 1085, 718, ''],
    ['h', 780, 832, 712, 880, ''],
    ['h', 905, 925, 932, 994, 'm'],
    ['h', 245, 1148, 358, 1174, 'm'],
    ['h', 245, 1148, 172, 1146, ''],

    // left ring
    ['c', 244, 605, 238, 715, 'cd'],
    ['c', 390, 812, 530, 745, 'cd'],
    ['c', 378, 492, 532, 570, 'c'],
    ['c', 378, 492, 244, 605, 'c'],
    ['c', 238, 715, 390, 812, 'c'],
    ['c', 530, 745, 532, 570, 'c'],
    ['h', 378, 492, 350, 424, ''],
    ['h', 244, 605, 130, 547, ''],
    ['h', 238, 715, 208, 640, ''],
    ['h', 238, 715, 124, 800, ''],

    // top ring
    ['h', 762, 190, 742, 63, ''],
    ['c', 762, 190, 920, 245, 'c'],
    ['c', 762, 190, 634, 300, 'c'],
    ['c', 634, 300, 655, 475, 'c'],
    ['c', 920, 245, 950, 420, 'c'],
    ['c', 655, 475, 818, 520, 'c'],
    ['c', 655, 475, 532, 570, 'c'],
    ['h', 818, 520, 838, 644, ''],
    ['c', 818, 520, 950, 420, 'c'],
    ['h', 634, 300, 512, 258, ''],
    ['h', 920, 245, 1023, 172, ''],
    ['s', 761, 193, 761, 196, 'h'],
    ['s', 652, 485, 648, 495, 'hd'],
    ['s', 646, 500, 646, 500, 'h'],

    // right ring
    ['c', 950, 420, 1097, 475, 'c'],
    ['s', 952, 430, 956, 436, 'hd'],
    ['s', 959, 441, 959, 441, 'h'],
    ['h', 1250, 390, 1254, 274, 'm'],
    ['c', 1250, 390, 1378, 490, 'c'],
    ['c', 1250, 390, 1097, 475, 'c'],
    ['c', 1378, 490, 1316, 660, 'c'],
    ['c', 1097, 475, 1130, 650, 'c'],
    ['c', 1130, 650, 1316, 660, 'c'],
    ['h', 1378, 490, 1495, 468, ''],
    ['h', 1316, 660, 1348, 740, ''],
    ['h', 1316, 660, 1372, 704, ''],
    ['h', 1130, 650, 1088, 688, 'd'],
    ['s', 1084, 691, 1084, 691, 'h'],
    ['s', 1255, 376, 1261, 366, 'h'],

    // bottom ring
    ['h', 780, 832, 808, 730, 'm'],
    ['c', 690, 815, 780, 832, 'cd'],
    ['c', 530, 745, 690, 812, 'c'],
    ['c', 780, 832, 905, 925, 'c'],
    ['c', 905, 925, 855, 1035, 'cd'],
    ['h', 692, 982, 602, 1053, ''],
    ['c', 690, 812, 692, 982, 'c'],
    ['c', 692, 982, 855, 1035, 'c'],
    ['h', 690, 812, 740, 730, ''],
    ['h', 905, 925, 1001, 859, ''],
    ['h', 855, 1035, 852, 1158, ''],
    ['h', 855, 1035, 941, 1030, ''],
    ['s', 680, 984, 670, 988, 'hd'],
    ['s', 661, 990, 661, 990, 'h'],

    // lower left ring
    ['h', 250, 988, 292, 916, 'd'],
    ['c', 250, 988, 245, 1148, 'c'],
    ['c', 245, 1148, 188, 1275, 'cd'],
    ['h', 365, 985, 478, 1023, 'm'],
    ['c', 390, 815, 365, 985, 'c'],
    ['c', 250, 988, 365, 985, 'c'],
    ['h', 250, 988, 130, 957, 'm'],
    ['c', 365, 985, 305, 1110, 'cd'],
    ['h', 305, 1112, 172, 1083, 'm'],
    ['h', 188, 1275, 186, 1390, ''],
    ['h', 188, 1275, 59, 1251, 'm'],
    ['c', 305, 1112, 300, 1282, 'c'],
    ['h', 300, 1282, 427, 1306, 'm'],
    ['c', 188, 1275, 300, 1282, 'c'],
    ['h', 300, 1282, 262, 1386, 'd'],
    ['s', 261, 1390, 261, 1390, 'h'],
    ['h', 305, 1112, 398, 1111, ''],
    ['s', 408, 814, 424, 813, 'h']
];

bonds.forEach(function(b) {
    if (b[0] == 'h') hydrogen(b[1], b[2], b[3], b[4], b[5]);
    else tube(b[1], b[2], b[3], b[4], b[5]);
});
```
